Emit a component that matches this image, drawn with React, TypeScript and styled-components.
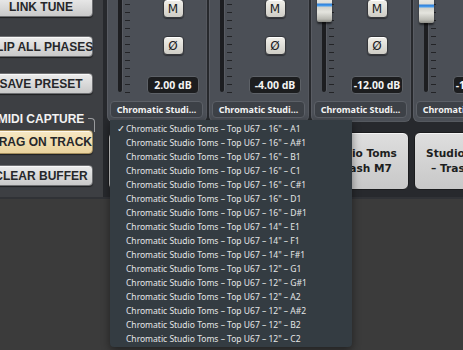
import React from 'react';
import styled, { createGlobalStyle } from 'styled-components';

const GlobalStyle = createGlobalStyle`
  html, body {
    margin: 0;
    padding: 0;
    background: #3b3b3b;
  }
  body {
    width: 463px;
    height: 350px;
    overflow: hidden;
    font-family: "Noto Sans", "DejaVu Sans", sans-serif;
  }
`;

const Screen = styled.div`
  position: relative;
  width: 463px;
  height: 350px;
  overflow: hidden;
  display: flex;
  flex-direction: column;
  background: #3b3b3b;
`;

const Rack = styled.div`
  display: flex;
  height: 197px;
  flex-shrink: 0;
  background: #27292d;
  border-bottom: 2px solid #303236;
`;

const Floor = styled.div`
  flex: 1;
  background: #3b3b3b;
`;

/* left column of big buttons */

const LeftPanel = styled.div`
  width: 118px;
  margin-left: -15px;
  flex-shrink: 0;
  display: flex;
  flex-direction: column;
  padding: 0 10px 0 4px;
  box-sizing: border-box;
  background: #3d3f43;
`;

const PanelButton = styled.div<{ top: number; tall?: boolean; active?: boolean }>`
  margin-top: ${p => p.top}px;
  height: ${p => (p.tall ? 24 : 21)}px;
  box-sizing: border-box;
  display: flex;
  align-items: center;
  justify-content: center;
  border-radius: 4px;
  border: 1px solid ${p => (p.active ? '#a48d5c' : '#6f7073')};
  background: ${p =>
    p.active
      ? 'linear-gradient(#f7e8c3, #ead39e)'
      : 'linear-gradient(#ececec, #c9c9c9)'};
  box-shadow: inset 0 1px 0 rgba(255, 255, 255, 0.7), 0 1px 1px rgba(0, 0, 0, 0.5);
  font-family: "Liberation Sans", Arial, sans-serif;
  font-weight: bold;
  font-size: 12px;
  color: #26272a;
  white-space: nowrap;
`;

const CaptureLabel = styled.div`
  position: relative;
  margin-top: 18px;
  height: 14px;
  display: flex;
  align-items: center;
  justify-content: center;
  font-family: "Liberation Sans", Arial, sans-serif;
  font-weight: bold;
  font-size: 12px;
  color: #f2f2f2;
  white-space: nowrap;

  &::after {
    content: '';
    position: absolute;
    right: -2px;
    top: 6px;
    width: 6px;
    height: 13px;
    border-top: 1px solid #9a9b9e;
    border-right: 1px solid #9a9b9e;
    border-top-right-radius: 4px;
  }
`;

/* mixer strips */

const Channels = styled.div`
  display: flex;
  flex-direction: column;
  margin-left: 4px;
  min-width: 0;
`;

const StripRow = styled.div`
  display: flex;
  gap: 2px;
  height: 122px;
`;

const Strip = styled.div`
  width: 100px;
  flex-shrink: 0;
  box-sizing: border-box;
  display: flex;
  flex-direction: column;
  padding: 0 4px 4px 3px;
  background: #4b4f56;
  border-radius: 0 0 6px 6px;
  box-shadow: inset 1px 0 0 rgba(255, 255, 255, 0.08), inset -1px 0 0 rgba(255, 255, 255, 0.05),
    inset 0 -1px 0 rgba(255, 255, 255, 0.06);
`;

const StripBody = styled.div`
  display: flex;
  height: 101px;
`;

const FaderColumn = styled.div`
  position: relative;
  width: 33px;
  display: flex;
`;

const Track = styled.div`
  margin-left: 8px;
  width: 4px;
  height: 92px;
  background: #1d1e21;
  border-radius: 0 0 2px 2px;
  box-shadow: 1px 0 0 rgba(255, 255, 255, 0.08);
`;

const Ticks = styled.div`
  margin: 4px 0 0 3px;
  width: 5px;
  height: 89px;
  background: repeating-linear-gradient(to bottom, #232427 0 1px, transparent 1px 8px);
`;

const Knob = styled.div`
  position: absolute;
  left: 3px;
  width: 15px;
  height: 28px;
  border-radius: 2px;
  background: linear-gradient(
    #f4f4ef 0,
    #dcdcd6 9px,
    #2f7fd8 10px,
    #4aa0f0 12px,
    #d2d2cb 13px,
    #e4e4de 18px,
    #b9b9b2 25px,
    #8d8d87 28px
  );
  box-shadow: 0 2px 2px rgba(0, 0, 0, 0.55);
`;

const Controls = styled.div`
  flex: 1;
  display: flex;
  flex-direction: column;
  align-items: center;
`;

const SquareButton = styled.div<{ top: number }>`
  margin-top: ${p => p.top}px;
  width: 21px;
  height: 19px;
  box-sizing: border-box;
  display: flex;
  align-items: center;
  justify-content: center;
  border-radius: 4px;
  border: 1px solid #35373b;
  background: linear-gradient(#f1f0ea, #cfcdc6);
  box-shadow: inset 0 1px 0 #fff, 0 1px 1px rgba(0, 0, 0, 0.4);
  font-family: "DejaVu Sans", sans-serif;
  font-size: 12px;
  color: #202124;
`;

const Level = styled.div`
  margin-top: 21px;
  width: 52px;
  height: 18px;
  box-sizing: border-box;
  display: flex;
  align-items: center;
  justify-content: center;
  border-radius: 4px;
  background: #1c1d1f;
  border: 1px solid #5d6167;
  font-weight: bold;
  font-size: 10.5px;
  color: #f4f4f4;
  white-space: nowrap;
`;

const NameButton = styled.div`
  height: 17px;
  box-sizing: border-box;
  display: flex;
  align-items: center;
  justify-content: center;
  padding: 0 4px;
  border-radius: 4px;
  background: #3d4147;
  border: 1px solid #5c6067;
  font-weight: bold;
  font-size: 9px;
  color: #f2f2f2;
  white-space: nowrap;
  overflow: hidden;
`;

/* trigger pads */

const PadRow = styled.div`
  display: flex;
  gap: 5px;
  margin: 10px 0 0 1px;
`;

const Pad = styled.div`
  width: 97px;
  height: 58px;
  flex-shrink: 0;
  box-sizing: border-box;
  display: flex;
  align-items: center;
  justify-content: center;
  text-align: center;
  border-radius: 6px;
  border: 1px solid #1b1c1e;
  background: linear-gradient(#dedede, #c8c8c8);
  box-shadow: inset 0 1px 0 #f4f4f4;
  font-family: "DejaVu Sans", sans-serif;
  font-weight: bold;
  font-size: 10.6px;
  line-height: 15px;
  color: #1d1e20;
`;

/* open name menu */

const Menu = styled.div`
  position: absolute;
  left: 110px;
  top: 120px;
  width: 242px;
  height: 227px;
  box-sizing: border-box;
  padding-top: 1px;
  background: #343c42;
  box-shadow: 0 3px 8px rgba(0, 0, 0, 0.45);
  border-radius: 0 0 4px 4px;
`;

const MenuItem = styled.div`
  display: flex;
  align-items: center;
  height: 14px;
  padding-left: 7px;
  font-size: 8.5px;
  color: #e4e6e7;
  white-space: nowrap;
`;

const Check = styled.span`
  width: 9px;
  font-size: 9.5px;
`;

const strips = [
  { level: '2.00 dB', knobTop: -60 },
  { level: '-4.00 dB', knobTop: -40 },
  { level: '-12.00 dB', knobTop: -6 },
  { level: '-12.00 dB', knobTop: -5 },
];

const notes = [
  ['16', 'A1'],
  ['16', 'A#1'],
  ['16', 'B1'],
  ['16', 'C1'],
  ['16', 'C#1'],
  ['16', 'D1'],
  ['16', 'D#1'],
  ['14', 'E1'],
  ['14', 'F1'],
  ['14', 'F#1'],
  ['12', 'G1'],
  ['12', 'G#1'],
  ['12', 'A2'],
  ['12', 'A#2'],
  ['12', 'B2'],
  ['12', 'C2'],
];

export default function App() {
  return (
    <Screen>
      <GlobalStyle />
      <Rack>
        <LeftPanel>
          <PanelButton top={-4}>LINK TUNE</PanelButton>
          <PanelButton top={19}>FLIP ALL PHASES</PanelButton>
          <PanelButton top={16}>SAVE PRESET</PanelButton>
          <CaptureLabel>MIDI CAPTURE</CaptureLabel>
          <PanelButton top={4} tall active>
            DRAG ON TRACK
          </PanelButton>
          <PanelButton top={11}>CLEAR BUFFER</PanelButton>
        </LeftPanel>
        <Channels>
          <StripRow>
            {strips.map((s, i) => (
              <Strip key={i}>
                <StripBody>
                  <FaderColumn>
                    <Track />
                    <Ticks />
                    <Knob style={{ top: s.knobTop }} />
                  </FaderColumn>
                  <Controls>
                    <SquareButton top={-1}>M</SquareButton>
                    <SquareButton top={18}>Ø</SquareButton>
                    <Level>{s.level}</Level>
                  </Controls>
                </StripBody>
                <NameButton>Chromatic Studi...</NameButton>
              </Strip>
            ))}
          </StripRow>
          <PadRow>
            {strips.map((_, i) => (
              <Pad key={i}>
                Studio Toms
                <br />– Trash M7
              </Pad>
            ))}
          </PadRow>
        </Channels>
      </Rack>
      <Floor />
      <Menu>
        {notes.map(([size, note], i) => (
          <MenuItem key={i}>
            <Check>{i === 0 ? '✓' : ''}</Check>
            Chromatic Studio Toms – Top U67 – {size}" – {note}
          </MenuItem>
        ))}
      </Menu>
    </Screen>
  );
}
